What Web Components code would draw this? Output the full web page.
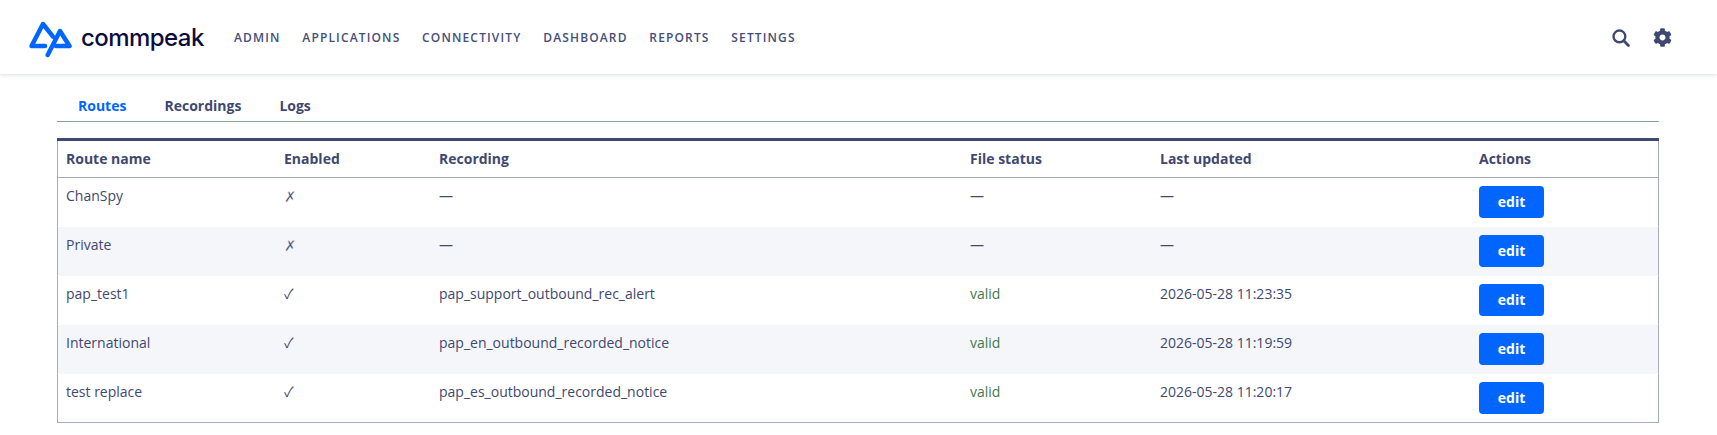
<!DOCTYPE html>
<html lang="en"><head><meta charset="utf-8"><title>Routes</title>
<style>
html,body{margin:0;padding:0;background:#fff}
body{font:14px/21px "Open Sans",sans-serif;color:#3f4870;height:435px;overflow:hidden}
main{display:block;padding:0 58px 0 57px}
</style></head><body>
<app-header>
  <nav-link>ADMIN</nav-link><nav-link>APPLICATIONS</nav-link><nav-link>CONNECTIVITY</nav-link><nav-link>DASHBOARD</nav-link><nav-link>REPORTS</nav-link><nav-link>SETTINGS</nav-link>
</app-header>
<main>
  <tab-bar><tab-item active>Routes</tab-item><tab-item>Recordings</tab-item><tab-item>Logs</tab-item></tab-bar>
  <route-table>
    <route-row head><span>Route name</span><span>Enabled</span><span>Recording</span><span>File status</span><span>Last updated</span><span>Actions</span></route-row>
    <route-row><span>ChanSpy</span><state-mark off>✗</state-mark><span>—</span><span>—</span><span>—</span><edit-button>edit</edit-button></route-row>
    <route-row striped><span>Private</span><state-mark off>✗</state-mark><span>—</span><span>—</span><span>—</span><edit-button>edit</edit-button></route-row>
    <route-row><span>pap_test1</span><state-mark>✓</state-mark><span>pap_support_outbound_rec_alert</span><status-text>valid</status-text><span>2026-05-28 11:23:35</span><edit-button>edit</edit-button></route-row>
    <route-row striped><span>International</span><state-mark>✓</state-mark><span>pap_en_outbound_recorded_notice</span><status-text>valid</status-text><span>2026-05-28 11:19:59</span><edit-button>edit</edit-button></route-row>
    <route-row last><span>test replace</span><state-mark>✓</state-mark><span>pap_es_outbound_recorded_notice</span><status-text>valid</status-text><span>2026-05-28 11:20:17</span><edit-button>edit</edit-button></route-row>
  </route-table>
</main>
<script>
function def(name, html){
  customElements.define(name, class extends HTMLElement{
    constructor(){super();this.attachShadow({mode:'open'}).innerHTML=html;}
  });
}
const cog="M487.4 315.7l-42.6-24.6c4.3-23.2 4.3-47 0-70.2l42.6-24.6c4.9-2.8 7.1-8.6 5.5-14-11.1-35.6-30-67.8-54.7-94.6-3.8-4.1-10-5.1-14.8-2.3L380.8 110c-17.9-15.4-38.5-27.3-60.8-35.1V25.8c0-5.6-3.9-10.5-9.4-11.7-36.7-8.2-74.3-7.8-109.2 0-5.5 1.2-9.4 6.1-9.4 11.7V75c-22.2 7.9-42.8 19.8-60.8 35.1L88.7 85.5c-4.9-2.8-11-1.9-14.8 2.3-24.7 26.7-43.6 58.9-54.7 94.6-1.7 5.4.6 11.2 5.5 14L67.3 221c-4.3 23.2-4.3 47 0 70.2l-42.6 24.6c-4.9 2.8-7.1 8.6-5.5 14 11.1 35.6 30 67.8 54.7 94.6 3.8 4.1 10 5.1 14.8 2.3l42.6-24.6c17.9 15.4 38.5 27.3 60.8 35.1v49.2c0 5.6 3.9 10.5 9.4 11.7 36.7 8.2 74.3 7.8 109.2 0 5.5-1.2 9.4-6.1 9.4-11.7v-49.2c22.2-7.9 42.8-19.8 60.8-35.1l42.6 24.6c4.9 2.8 11 1.9 14.8-2.3 24.7-26.7 43.6-58.9 54.7-94.6 1.5-5.5-.7-11.3-5.6-14.1zM256 336c-44.1 0-80-35.9-80-80s35.9-80 80-80 80 35.9 80 80-35.9 80-80 80z";
def('app-header',`<style>
:host{display:flex;align-items:center;height:74px;padding:0 45px 0 29px;background:#fff;box-shadow:0 1px 4px rgba(63,72,112,.18);position:relative}
.logo{display:flex;align-items:center;width:205px;flex:none}
.mark{flex:none;display:block;margin-top:3px}
.word{font:500 24px/32px Inter,sans-serif;color:#0d0d3d;margin-left:8px;margin-top:1px;letter-spacing:-.55px}
nav{display:flex;gap:21.7px;flex:1;margin-top:2px}
.icons{display:flex;align-items:center;gap:23px;margin-top:1px}
svg.i{display:block;fill:#3f4870}
</style>
<div class="logo">
<svg class="mark" width="44" height="38" viewBox="0 0 44 38" fill="none" stroke="#0066ff" stroke-width="4.5" stroke-linecap="round" stroke-linejoin="round"><path d="M16 26 H2.5 L14 4 L24 16.7"/><path d="M18.7 35 L31 11 L40.5 26 H27"/></svg>
<span class="word">commpeak</span></div>
<nav><slot></slot></nav>
<div class="icons">
<svg class="i" width="18" height="18" viewBox="0 0 18 18" style="fill:none" stroke="#3f4870"><circle cx="7.4" cy="7.4" r="5.9" stroke-width="2.4"/><path d="M11.8 11.8 L16.4 16.4" stroke-width="2.8" stroke-linecap="round"/></svg>
<svg class="i" width="19" height="19" viewBox="0 0 512 512"><path d="${cog}"/></svg>
</div>`);
def('nav-link',`<style>:host{display:block;font:600 12px/18px "Open Sans",sans-serif;letter-spacing:1.15px;color:#454e78}</style><slot></slot>`);
def('tab-bar',`<style>:host{display:flex;padding:21px 0 5px 21px;gap:38px;border-bottom:1px solid #7fa98f;margin-bottom:16px}</style><slot></slot>`);
def('tab-item',`<style>:host{display:block;font:700 14px/21px "Open Sans",sans-serif;color:#3f4870}:host([active]){color:#0066ff}</style><slot></slot>`);
def('route-table',`<style>:host{display:block;border-top:3px solid #3f4870}</style><slot></slot>`);
def('route-row',`<style>
:host{--row-bg:#fff;display:grid;grid-template-columns:218px 155px 531px 190px 319px 187px;box-sizing:border-box;height:49px;border:solid #a5aabf;border-width:0 1px 1px;border-bottom-color:transparent;color:#3f4870;font:400 14px/21px "Open Sans",sans-serif}
:host([striped]){--row-bg:#f5f6fa;background:#f5f6fa}
:host([head]){height:37px;border-bottom-color:#a5aabf;font-weight:700}
:host([last]){border-bottom-color:#9fb0cb}
::slotted(*){padding:7px 8px 8px;min-width:0}
::slotted(edit-button){padding:0;margin:8px}
</style><slot></slot>`);
def('state-mark',`<style>:host{display:block;font-family:"Noto Sans CJK JP",sans-serif}
:host([off]){font-family:"DejaVu Sans",sans-serif;font-size:15px;line-height:24px;-webkit-text-stroke:.45px var(--row-bg)}</style><slot></slot>`);
def('status-text',`<style>:host{display:block;color:#3f7a4e}</style><slot></slot>`);
def('edit-button',`<style>:host{display:block;box-sizing:border-box;width:65px;height:32px;border-radius:4px;background:#0066ff;color:#fff;font:700 14px/32px "Open Sans",sans-serif;text-align:center}</style><slot></slot>`);
</script>
</body></html>
